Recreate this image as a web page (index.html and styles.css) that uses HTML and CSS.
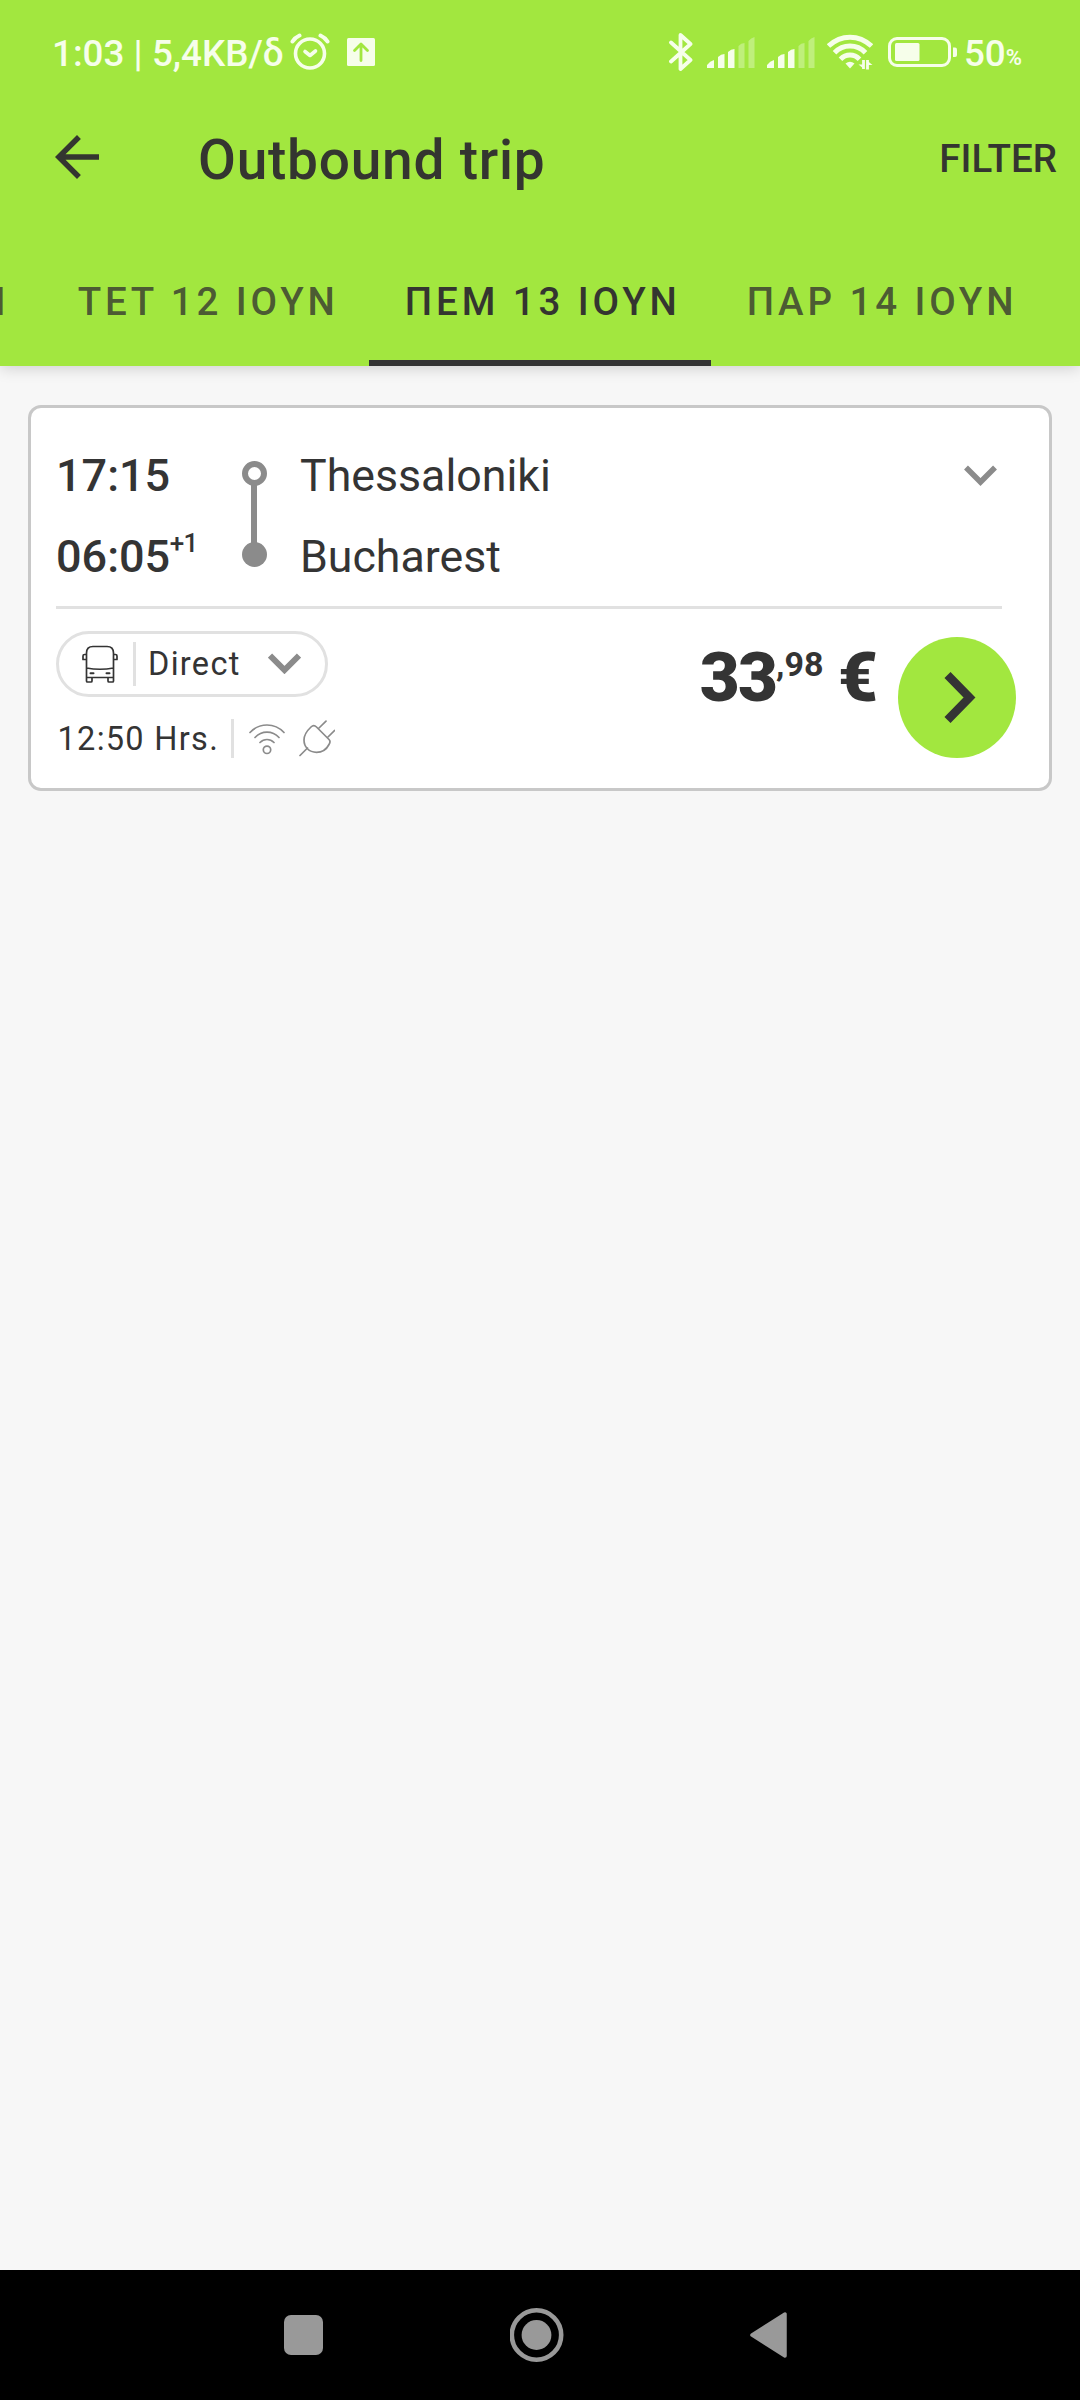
FILE: index.html
```html
<!DOCTYPE html>
<html lang="en">
<head>
<meta charset="utf-8">
<title>Outbound trip</title>
<link rel="stylesheet" href="styles.css">
</head>
<body>
<header class="header">
  <div class="status">
    <span class="status-text">1:03 | 5,4KB/δ</span>
    <svg class="alarm" width="40" height="38" viewBox="0 0 40 38" fill="none" stroke="currentColor" stroke-linecap="round" stroke-linejoin="round"><circle cx="20" cy="20.500" r="14.500" stroke-width="3.600"/><path d="M2.500 8.500Q5 4.500 9.500 2.500M37.500 8.500Q35 4.500 30.500 2.500" stroke-width="4"/><path d="M15 18.500L20 22.500L25.500 18" stroke-width="3.600"/></svg>
    <svg class="upload" width="28" height="28" viewBox="0 0 28 28"><rect width="28" height="28" rx="1.500" fill="currentColor"/><path d="M14 22.500V7M7.500 12.500L14 6L20.500 12.500" fill="none" stroke="#a2e73f" stroke-width="2.800" stroke-linecap="round" stroke-linejoin="round"/></svg>
    <div class="status-right">
      <svg class="bt" width="24" height="38" viewBox="0 0 24 38" fill="none" stroke="currentColor" stroke-width="3.800" stroke-linecap="round" stroke-linejoin="round"><path d="M2 9.500L21.500 27L11.500 36V2L21.500 11L2 28.500"/></svg>
      <svg class="signal" width="48" height="31" viewBox="0 0 48 31" fill="currentColor"><path d="M0 31V28Q3 24 7 23V31ZM11 31V20Q14 17 17.500 17V31ZM21 31V15Q24 12 27.500 12V31Z"/><path opacity=".35" d="M31.500 31V9Q34 6 37.500 6V31ZM41.500 31V4Q44 1 47.500 0V31Z"/></svg>
      <svg class="signal" width="48" height="31" viewBox="0 0 48 31" fill="currentColor"><path d="M0 31V28Q3 24 7 23V31ZM11 31V20Q14 17 17.500 17V31ZM21 31V15Q24 12 27.500 12V31Z"/><path opacity=".35" d="M31.500 31V9Q34 6 37.500 6V31ZM41.500 31V4Q44 1 47.500 0V31Z"/></svg>
      <svg class="wifi" width="46" height="36" viewBox="0 0 46 36" fill="none" stroke="currentColor" stroke-width="5"><path d="M1.500 12Q11 3.200 23 3.200Q35 3.200 44.500 12M7.500 18.700Q14 12 23 12Q32 12 38.500 18.700M13.500 25.200Q17.500 21 23 21Q28.500 21 32.500 25.200"/><path d="M18.500 29.500Q23 26 27.500 29.500L23 34.500Z" fill="currentColor" stroke="none"/><path d="M36.500 26V35M40.500 35.500V26" stroke-width="2.800"/><path d="M31.500 30.500H37V35ZM45.500 31H40V26.500Z" fill="currentColor" stroke="none"/></svg>
      <svg class="battery" width="69" height="30" viewBox="0 0 69 30"><rect x="1.500" y="1.500" width="60" height="27" rx="7.500" fill="none" stroke="currentColor" stroke-width="3"/><rect x="7" y="6" width="24.500" height="18" rx="1.500" fill="currentColor"/><path d="M65 10.500H67Q69 10.500 69 12.500V18Q69 20 67 20H65Z" fill="currentColor"/></svg>
      <span class="status-text">50</span><span class="percent">%</span>
    </div>
  </div>
  <div class="appbar">
    <svg class="back" width="44" height="44" viewBox="4 4 16 16" fill="#343530"><path d="M20 11H7.830l5.590-5.590L12 4l-8 8 8 8 1.410-1.410L7.830 13H20v-2z"/></svg>
    <h1 class="title">Outbound trip</h1>
    <span class="filter">FILTER</span>
  </div>
  <nav class="tabs">
    <span class="tab previous">ΤΡΙ 11 ΙΟΥΝ</span>
    <span class="tab">ΤΕΤ 12 ΙΟΥΝ</span>
    <span class="tab active">ΠΕΜ 13 ΙΟΥΝ</span>
    <span class="tab">ΠΑΡ 14 ΙΟΥΝ</span>
  </nav>
</header>
<main class="content">
  <article class="card">
    <div class="route">
      <div class="times">
        <div class="time">17:15</div>
        <div class="time">06:05<span class="plus">+1</span></div>
      </div>
      <svg class="line" width="26" height="106" viewBox="0 0 26 106"><path d="M12 24V82" stroke="#8b8b8b" stroke-width="6"/><circle cx="12.500" cy="12.500" r="9.500" fill="#fff" stroke="#8b8b8b" stroke-width="6"/><circle cx="12.500" cy="93.500" r="12.500" fill="#8b8b8b"/></svg>
      <div class="stops">
        <div class="stop">Thessaloniki</div>
        <div class="stop">Bucharest</div>
      </div>
      <svg class="expand" width="33" height="21" viewBox="0 0 33 21"><path d="M2 2.500L16.500 17L31 2.500" fill="none" stroke="#8b8b8b" stroke-width="5.500"/></svg>
    </div>
    <div class="details">
      <div class="info">
        <div class="pill">
          <svg class="bus" width="36" height="38" viewBox="0 0 36 38" fill="none" stroke="#343434" stroke-width="1.700" stroke-linejoin="round"><path d="M4.500 32.500V8Q4.500 1.500 11 1.500H25Q31.500 1.500 31.500 8V32.500M4.500 23Q18 25.500 31.500 23M4.500 32.500H31.500M4.500 9.500H2.500Q1 9.500 1 11V14.500H4.500M31.500 9.500H33.500Q35 9.500 35 11V14.500H31.500M4.500 32.500V36Q4.500 37 5.500 37H9Q10 37 10 36V33M26 33V36Q26 37 27 37H30.500Q31.500 37 31.500 36V32.500"/><path d="M8.500 28.300H11.500M24.500 28.300H27.500" stroke-width="2" stroke-linecap="round"/></svg>
          <span class="sep"></span>
          <span class="small">Direct</span>
          <svg class="chev" width="33" height="21" viewBox="0 0 33 21"><path d="M2 2.500L16.500 17L31 2.500" fill="none" stroke="#8b8b8b" stroke-width="6"/></svg>
        </div>
        <div class="duration">
          <span class="small">12:50 Hrs.</span>
          <span class="sep low"></span>
          <svg class="wlan" width="36" height="32" viewBox="0 0 36 32" fill="none" stroke="#8b8b8b" stroke-width="1.700" stroke-linecap="round"><path d="M1 9.500Q8 2 18 2Q28 2 35 9.500M6 14.500Q11 9.200 18 9.200Q25 9.200 30 14.500M11 19.500Q14 16.500 18 16.500Q22 16.500 25 19.500"/><circle cx="18" cy="26.800" r="3.700"/></svg>
          <svg class="plug" width="36" height="37" viewBox="0 0 36 37" fill="none" stroke="#8b8b8b" stroke-width="1.700" stroke-linecap="round" stroke-linejoin="round"><path d="M1 35.500L8.500 28M19.500 8.500L27 1.200M28.500 17.500L35.500 10.500M12 7Q14.800 4.300 17.500 7L30 19.500Q32 21.500 30 24.500Q26 32.300 17.500 32.300C10 32.300 5 27 5 20Q5 13.500 12 7Z"/></svg>
        </div>
      </div>
      <div class="price">33<span class="cents">,98</span><span class="euro">€</span></div>
      <svg class="go" width="118" height="121" viewBox="0 0 118 121"><ellipse cx="59" cy="60.500" rx="59" ry="60.500" fill="#a2e73f"/><path d="M49.500 38L71.500 60.500L49.500 83" fill="none" stroke="#343434" stroke-width="8.500"/></svg>
    </div>
  </article>
</main>
<footer class="nav">
  <svg width="39" height="40" viewBox="0 0 39 40"><rect width="39" height="40" rx="7" fill="#999"/></svg>
  <svg width="54" height="54" viewBox="0 0 54 54"><circle cx="26.500" cy="27" r="24.700" fill="none" stroke="#999" stroke-width="4.600"/><circle cx="26.500" cy="27" r="14.900" fill="#999"/></svg>
  <svg width="37" height="46" viewBox="0 0 37 46"><path d="M2 23L35 2V44Z" fill="#999" stroke="#999" stroke-width="3.500" stroke-linejoin="round"/></svg>
</footer>
</body>
</html>
```
FILE: styles.css
```css
* { box-sizing: border-box; }
body { margin: 0; width: 1080px; height: 2400px; display: flex; flex-direction: column; overflow: hidden; background: #f7f7f7; color: #343434; font-family: Roboto, sans-serif; }
svg { display: block; flex: none; }

/* Status bar, title bar and date tabs */
.header { flex: none; height: 366px; background: #a2e73f; box-shadow: 0 3px 14px rgba(0,0,0,.15); }
.status { display: flex; align-items: center; height: 78px; padding: 26px 58px 0 52px; color: #f6feea; }
.status-text { font-size: 36.800px; font-weight: 500; line-height: 46px; padding-top: 3px; }
.alarm { margin-left: 6px; }
.upload { margin-left: 17px; }
.status-right { display: flex; align-items: center; margin-left: auto; }
.bt { margin-right: 13.500px; }
.signal { margin-right: 12px; }
.battery { margin: 0 7px 0 15px; }
.percent { font-size: 22px; font-weight: 600; padding-top: 11px; }
.appbar { display: flex; align-items: center; height: 159px; padding: 0 23px 0 55px; color: #343530; }
.back { margin-bottom: 1px; }
.title { margin: 0 0 0 99px; padding-top: 5px; font-size: 55px; font-weight: 500; letter-spacing: .77px; }
.filter { margin-left: auto; padding-top: 1px; font-size: 38.500px; font-weight: 500; }
.tabs { display: flex; justify-content: flex-end; height: 129px; width: 1048px; white-space: nowrap; }
.tab { flex: none; display: flex; align-items: center; padding: 0 30.500px 0 35.500px; font-size: 38.500px; font-weight: 500; letter-spacing: 3.900px; color: rgba(52,53,48,.8); }
.active { color: #343530; border-bottom: 6px solid #343434; padding-top: 6px; }
.previous { padding-right: 33px; }

/* Trip card */
.content { flex: 1; padding: 39px 28px; }
.card { height: 386px; padding: 28px 33px 0 25px; background: #fff; border: 3px solid #c8c8c8; border-radius: 13px; }
.route { display: flex; height: 173px; margin-right: 14px; border-bottom: 3px solid #e1e1e1; }
.times { width: 186px; }
.time, .stop { display: flex; height: 81px; line-height: 80px; font-size: 44.700px; }
.time { font-size: 45px; font-weight: 500; line-height: 79px; }
.plus { font-size: 26px; font-weight: 500; line-height: 52px; margin-left: -.5px; letter-spacing: -.5px; }
.line { margin-top: 25px; }
.stops { margin-left: 32px; }
.expand { margin: 29px 5.500px 0 auto; }
.details { display: flex; }
.info { padding-top: 22px; }
.pill { display: flex; align-items: center; width: 272px; height: 66px; border: 3px solid #e1e1e1; border-radius: 33px; padding-left: 23px; }
.sep { width: 3px; height: 44px; background: #e1e1e1; margin: 0 12px 0 15px; }
.small { font-size: 32.500px; letter-spacing: 1.300px; }
.chev { margin: 0 24.500px 2px auto; }
.duration { display: flex; align-items: center; width: 290px; height: 39px; margin-top: 22px; padding-left: 1.500px; }
.low { height: 39px; margin: 0 15px 0 auto; }
.wlan { margin-right: 14px; }
.plug { margin-right: 11px; }
.price { display: flex; margin: 29px 22px 0 auto; font-size: 69px; font-weight: 900; line-height: 80px; letter-spacing: -1.900px; }
.cents { font-size: 34px; line-height: 52px; font-weight: 700; letter-spacing: 0; }
.euro { margin-left: 14.500px; }
.go { margin-top: 28px; }

/* System navigation */
.nav { flex: none; display: flex; align-items: center; height: 130px; background: #000; padding: 0 293px 0 284px; justify-content: space-between; }
```
